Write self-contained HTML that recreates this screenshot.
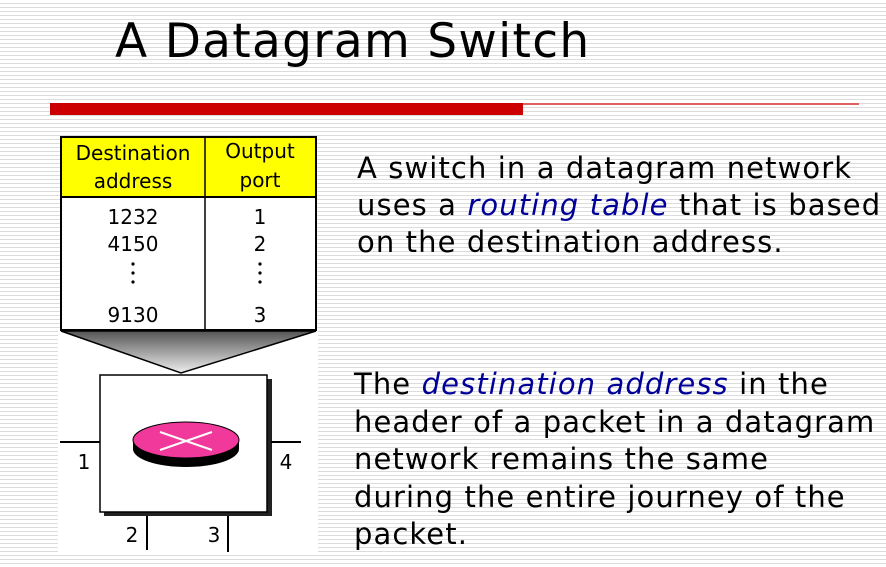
<!DOCTYPE html>
<html><head><meta charset="utf-8"><style>
body{margin:0;width:886px;height:567px;overflow:hidden;position:relative;
background:repeating-linear-gradient(to bottom,#fff 0,#fff 3px,#dcdcdc 3px,#dcdcdc 4px);
font-family:"DejaVu Sans","Liberation Sans",sans-serif;}
.t{position:absolute;white-space:nowrap;color:#000;}
i{color:#000099;}
</style></head><body>
<div class="t" style="left:115px;top:12px;font-size:47px;line-height:60px;letter-spacing:1.3px;">A Datagram Switch</div>
<div style="position:absolute;left:50px;top:103px;width:473px;height:12px;background:#cc0000"></div>
<div style="position:absolute;left:523px;top:103px;width:336px;height:2px;background:#e06060"></div>
<svg style="position:absolute;left:0;top:0" width="886" height="567">
<defs><linearGradient id="g" x1="0" y1="0" x2="0" y2="1"><stop offset="0" stop-color="#555"/><stop offset="1" stop-color="#eee"/></linearGradient></defs>
<rect x="58" y="330" width="260" height="222" fill="#fff"/>
<rect x="61" y="137" width="255" height="60" fill="#ffff00"/>
<rect x="61" y="197" width="255" height="133" fill="#fff"/>
<rect x="61" y="137" width="255" height="193" fill="none" stroke="#000" stroke-width="2"/>
<line x1="61" y1="197" x2="316" y2="197" stroke="#000" stroke-width="2"/>
<line x1="205" y1="137" x2="205" y2="330" stroke="#000" stroke-width="1.5"/>
<polygon points="61,331 316,331 181,373" fill="url(#g)" stroke="#000" stroke-width="1.5"/>
<rect x="104" y="379" width="168" height="137" fill="#222"/>
<rect x="100" y="375" width="167" height="137" fill="#fff" stroke="#000" stroke-width="1.5"/>
<line x1="60" y1="442" x2="100" y2="442" stroke="#000" stroke-width="2"/>
<line x1="271" y1="442" x2="301" y2="442" stroke="#000" stroke-width="2"/>
<line x1="147" y1="516" x2="147" y2="550" stroke="#000" stroke-width="2"/>
<line x1="228" y1="516" x2="228" y2="552" stroke="#000" stroke-width="2"/>
<ellipse cx="186" cy="449" rx="53" ry="18" fill="#000"/>
<rect x="133" y="440" width="106" height="9" fill="#000"/>
<ellipse cx="186" cy="440" rx="53" ry="18" fill="#f0399a" stroke="#000" stroke-width="1"/>
<line x1="160" y1="432" x2="212" y2="450" stroke="#fff" stroke-width="2"/>
<line x1="160" y1="450" x2="212" y2="432" stroke="#fff" stroke-width="2"/>
<g fill="#000"><circle cx="133" cy="264" r="1.6"/><circle cx="133" cy="273" r="1.6"/><circle cx="133" cy="282" r="1.6"/>
<circle cx="260" cy="264" r="1.6"/><circle cx="260" cy="273" r="1.6"/><circle cx="260" cy="282" r="1.6"/></g>
<g font-family="DejaVu Sans,sans-serif" font-size="20" text-anchor="middle">
<text x="133" y="160">Destination</text><text x="133" y="188">address</text>
<text x="260" y="158">Output</text><text x="260" y="187">port</text>
<text x="133" y="224">1232</text><text x="260" y="224">1</text>
<text x="133" y="251">4150</text><text x="260" y="251">2</text>
<text x="133" y="322">9130</text><text x="260" y="322">3</text>
<text x="84" y="469">1</text><text x="286" y="469">4</text>
<text x="132" y="542">2</text><text x="214" y="542">3</text>
</g>
</svg>
<div class="t" style="left:357px;top:150px;font-size:29px;line-height:37px;letter-spacing:1.1px;">A switch in a datagram network<br>uses a <i>routing table</i> that is based<br>on the destination address.</div>
<div class="t" style="left:354px;top:366px;font-size:29px;line-height:37.5px;letter-spacing:1.1px;">The <i>destination address</i> in the<br>header of a packet in a datagram<br>network remains the same<br>during the entire journey of the<br>packet.</div>
</body></html>
